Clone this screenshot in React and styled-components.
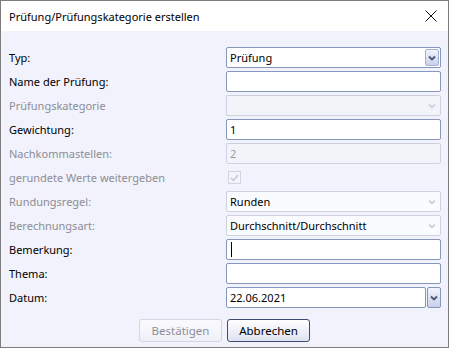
import React from "react";
import styled, { createGlobalStyle } from "styled-components";

const GlobalStyle = createGlobalStyle`
  html, body {
    margin: 0;
    padding: 0;
    background: #ffffff;
  }
  body {
    font-family: "Noto Sans", "Open Sans", sans-serif;
    font-size: 11px;
  }
`;

const Window = styled.div`
  box-sizing: border-box;
  width: 449px;
  height: 348px;
  border: 1px solid #7d7d7d;
  display: flex;
  flex-direction: column;
  background: #f1f2fb;
`;

const TitleBar = styled.div`
  height: 30px;
  flex: none;
  background: #ffffff;
  display: flex;
  align-items: center;
  justify-content: space-between;
  padding: 0 8px 0 8px;
  color: #000;
  font-size: 11px;
`;

const CloseButton = styled.div`
  width: 14px;
  height: 14px;
  display: flex;
  align-items: center;
  justify-content: center;
  margin-right: 2px;
`;

const Body = styled.div`
  flex: 1;
  padding: 16px 7px 0 8px;
  display: flex;
  flex-direction: column;
`;

const Form = styled.div`
  display: grid;
  grid-template-columns: 217px 215px;
  grid-auto-rows: 21px;
  row-gap: 3px;
  align-items: center;
`;

const Label = styled.div`
  color: ${({ disabled }) => (disabled ? "#8d8d95" : "#000")};
  white-space: nowrap;
  line-height: 21px;
`;

const Field = styled.div`
  box-sizing: border-box;
  height: 21px;
  border: 1px solid ${({ disabled, muted }) => (disabled || muted ? "#cdd2e2" : "#8597ba")};
  border-radius: 2px;
  background: ${({ disabled, muted }) =>
    disabled ? "#f3f4fa" : muted ? "#fafbfe" : "#ffffff"};
  display: flex;
  align-items: center;
  padding-left: 3px;
  color: ${({ disabled }) => (disabled ? "#9a9aa2" : "#000")};
  position: relative;
  flex: 1;
`;

const DropButton = styled.div`
  box-sizing: border-box;
  position: absolute;
  top: 1px;
  right: 1px;
  width: 14px;
  height: 17px;
  border: 1px solid ${({ plain }) => (plain ? "transparent" : "#a5b2d2")};
  border-radius: 2px;
  background: ${({ plain }) =>
    plain ? "transparent" : "linear-gradient(#f2f4fc, #c8d0ea)"};
  display: flex;
  align-items: center;
  justify-content: center;
`;

const DateRow = styled.div`
  display: flex;
  gap: 1px;
  height: 21px;
`;

const DateButton = styled.div`
  box-sizing: border-box;
  width: 14px;
  height: 21px;
  border: 1px solid #8597ba;
  border-radius: 2px;
  background: linear-gradient(#f2f4fc, #c8d0ea);
  display: flex;
  align-items: center;
  justify-content: center;
`;

const Caret = styled.span`
  display: inline-block;
  width: 1px;
  height: 15px;
  background: #000;
  margin-left: 1px;
`;

const CheckBox = styled.div`
  box-sizing: border-box;
  width: 13px;
  height: 13px;
  margin-left: 2px;
  border: 1px solid #cfd3e2;
  background: #f3f4fa;
  display: flex;
  align-items: center;
  justify-content: center;
`;

const ButtonRow = styled.div`
  display: flex;
  gap: 5px;
  margin-top: 11px;
  padding-left: 130px;
`;

const Button = styled.button`
  box-sizing: border-box;
  width: 83px;
  height: 23px;
  font-family: inherit;
  font-size: 11.5px;
  border-radius: 3px;
  padding: 0;
  border: 1px solid ${({ disabled }) => (disabled ? "#d3d6e2" : "#3e4c72")};
  background: ${({ disabled }) =>
    disabled
      ? "linear-gradient(#fbfbfe, #eef0f7)"
      : "linear-gradient(#ffffff, #dfe2f0)"};
  color: ${({ disabled }) => (disabled ? "#8d8d99" : "#000")};
`;

const Chevron = ({ color = "#46557a" }) => (
  <svg width="8" height="6" viewBox="0 0 8 6">
    <path d="M1 1.5 L4 4.5 L7 1.5" fill="none" stroke={color} strokeWidth="1.8" />
  </svg>
);

const Select = ({ value, disabled, plain }) => (
  <Field disabled={disabled} muted={plain && !disabled}>
    {value}
    <DropButton plain={plain}>
      <Chevron color={plain ? "#cfd3e0" : "#46557a"} />
    </DropButton>
  </Field>
);

export default function App() {
  return (
    <>
      <GlobalStyle />
      <Window>
        <TitleBar>
          <span>Prüfung/Prüfungskategorie erstellen</span>
          <CloseButton>
            <svg width="12" height="12" viewBox="0 0 12 12">
              <path d="M0.5 0.5 L11.5 11.5 M11.5 0.5 L0.5 11.5" stroke="#111" strokeWidth="1" />
            </svg>
          </CloseButton>
        </TitleBar>
        <Body>
          <Form>
            <Label>Typ:</Label>
            <Select value="Prüfung" />

            <Label>Name der Prüfung:</Label>
            <Field />

            <Label disabled>Prüfungskategorie</Label>
            <Select disabled plain />

            <Label>Gewichtung:</Label>
            <Field>1</Field>

            <Label disabled>Nachkommastellen:</Label>
            <Field disabled>2</Field>

            <Label disabled>gerundete Werte weitergeben</Label>
            <div>
              <CheckBox>
                <svg width="9" height="8" viewBox="0 0 9 8">
                  <path d="M1 4 L3.5 6.5 L8 1" fill="none" stroke="#c3c7d6" strokeWidth="1.5" />
                </svg>
              </CheckBox>
            </div>

            <Label disabled>Rundungsregel:</Label>
            <Select value="Runden" plain />

            <Label disabled>Berechnungsart:</Label>
            <Select value="Durchschnitt/Durchschnitt" plain />

            <Label>Bemerkung:</Label>
            <Field>
              <Caret />
            </Field>

            <Label>Thema:</Label>
            <Field />

            <Label>Datum:</Label>
            <DateRow>
              <Field>22.06.2021</Field>
              <DateButton>
                <Chevron />
              </DateButton>
            </DateRow>
          </Form>
          <ButtonRow>
            <Button disabled>Bestätigen</Button>
            <Button>Abbrechen</Button>
          </ButtonRow>
        </Body>
      </Window>
    </>
  );
}
